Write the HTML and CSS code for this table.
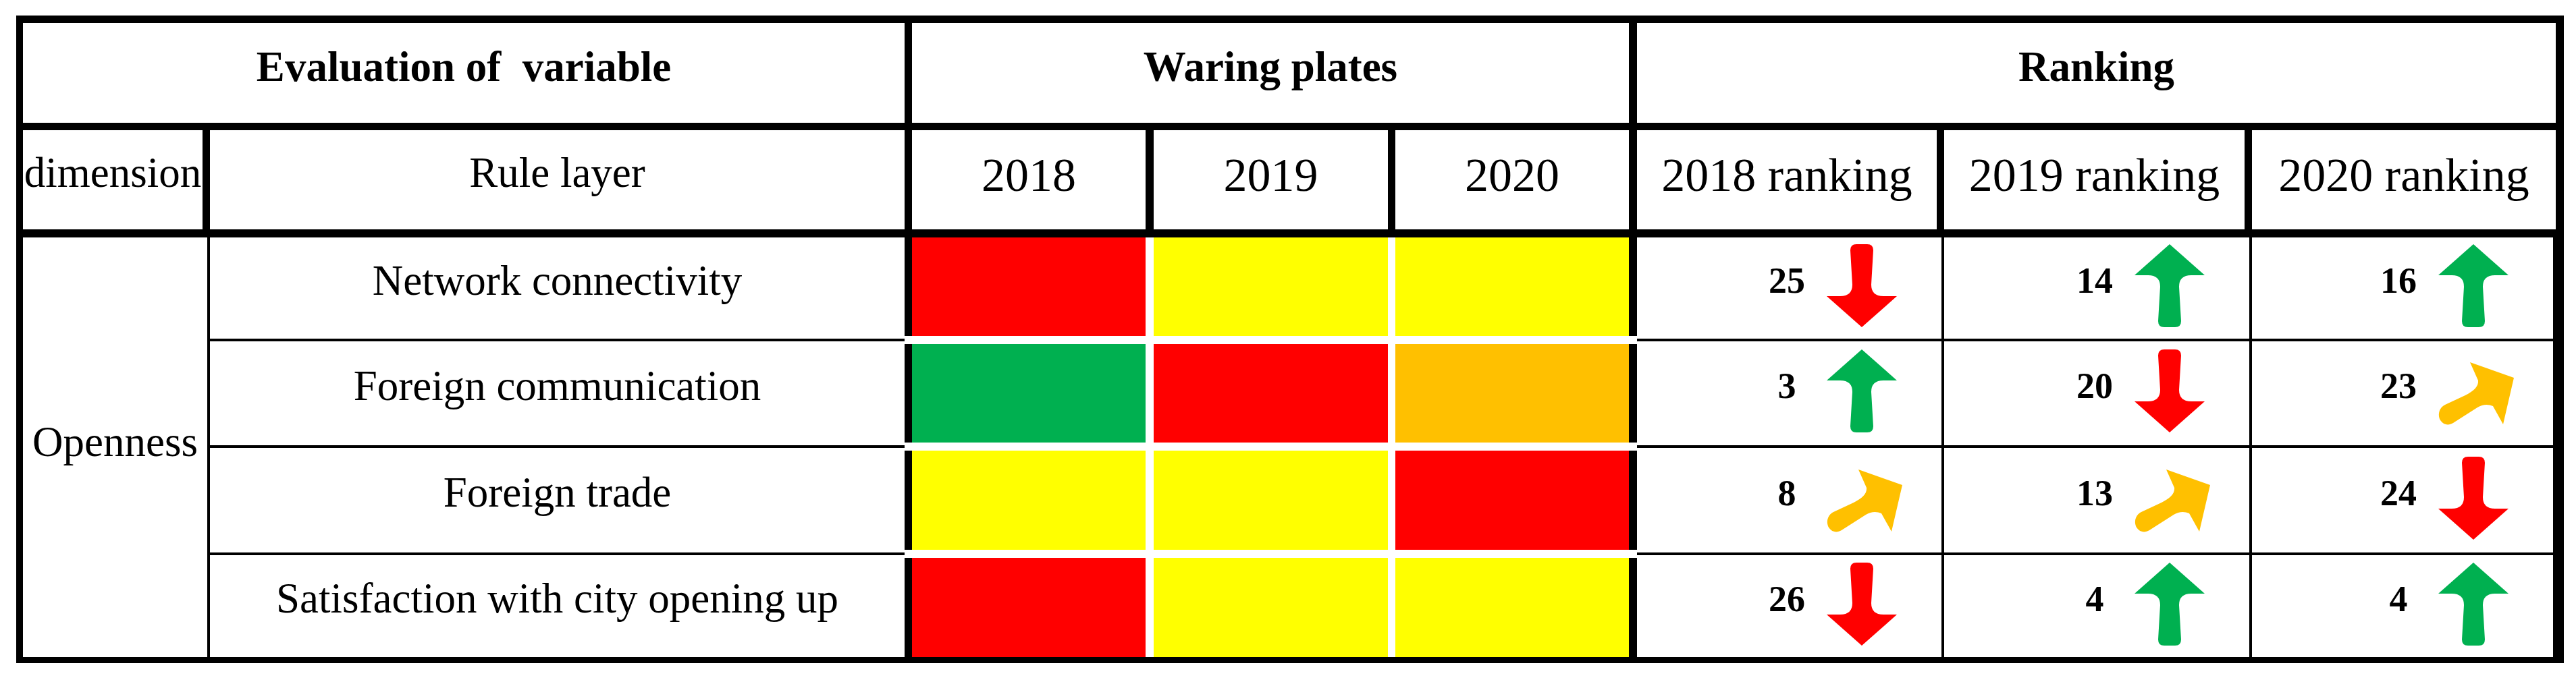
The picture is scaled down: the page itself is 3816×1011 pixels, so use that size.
FILE: index.html
```html
<!DOCTYPE html>
<html lang="en">
<head>
<meta charset="utf-8">
<title>Openness warning plates and ranking</title>
<link rel="stylesheet" href="styles.css">
</head>
<body>
<div class="sheet">
  <div class="cell hd1 span2">Evaluation of&nbsp; variable</div>
  <div class="cell hd1 span3 wide-r">Waring plates</div>
  <div class="cell hd1 span3 no-r">Ranking</div>

  <div class="cell hd2 small">dimension</div>
  <div class="cell hd2 small">Rule layer</div>
  <div class="cell hd2 wide-r">2018</div>
  <div class="cell hd2">2019</div>
  <div class="cell hd2 wide-r">2020</div>
  <div class="cell hd2">2018 ranking</div>
  <div class="cell hd2">2019 ranking</div>
  <div class="cell hd2 no-r">2020 ranking</div>

  <div class="cell dim">Openness</div>

  <div class="cell rule">Network connectivity</div>
  <div class="cell plate c1 b red"></div>
  <div class="cell plate c2 b yellow"></div>
  <div class="cell plate c3 b yellow"></div>
  <div class="cell rank"><span class="num">25</span><svg class="arrow" viewBox="0 0 112 123"><path class="down" d="M35,9 Q35,0 44,0 L60,0 Q69,0 69,9 L66,60 Q66,77 84,77 L104,77 L52,123 L0,77 L20,77 Q38,77 38,60 Z"/></svg></div>
  <div class="cell rank"><span class="num">14</span><svg class="arrow" viewBox="0 0 112 123"><path class="up" d="M35,114 Q35,123 44,123 L60,123 Q69,123 69,114 L66,63 Q66,46 84,46 L104,46 L52,0 L0,46 L20,46 Q38,46 38,63 Z"/></svg></div>
  <div class="cell rank no-r"><span class="num">16</span><svg class="arrow" viewBox="0 0 112 123"><path class="up" d="M35,114 Q35,123 44,123 L60,123 Q69,123 69,114 L66,63 Q66,46 84,46 L104,46 L52,0 L0,46 L20,46 Q38,46 38,63 Z"/></svg></div>

  <div class="cell rule">Foreign communication</div>
  <div class="cell plate c1 t b green"></div>
  <div class="cell plate c2 t b red"></div>
  <div class="cell plate c3 t b orange"></div>
  <div class="cell rank"><span class="num">3</span><svg class="arrow" viewBox="0 0 112 123"><path class="up" d="M35,114 Q35,123 44,123 L60,123 Q69,123 69,114 L66,63 Q66,46 84,46 L104,46 L52,0 L0,46 L20,46 Q38,46 38,63 Z"/></svg></div>
  <div class="cell rank"><span class="num">20</span><svg class="arrow" viewBox="0 0 112 123"><path class="down" d="M35,9 Q35,0 44,0 L60,0 Q69,0 69,9 L66,60 Q66,77 84,77 L104,77 L52,123 L0,77 L20,77 Q38,77 38,60 Z"/></svg></div>
  <div class="cell rank no-r"><span class="num">23</span><svg class="arrow" viewBox="0 0 112 123"><path class="side" transform="translate(0,19)" d="M47,0 L112,23 L96,92 L81,65 C74,62 66,62 58,67 L22,90 C14,95 6,92 2,84 C-1,76 2,67 10,63 L40,49 C52,43 60,36 59,27 Z"/></svg></div>

  <div class="cell rule">Foreign trade</div>
  <div class="cell plate c1 t b yellow"></div>
  <div class="cell plate c2 t b yellow"></div>
  <div class="cell plate c3 t b red"></div>
  <div class="cell rank"><span class="num">8</span><svg class="arrow" viewBox="0 0 112 123"><path class="side" transform="translate(0,19)" d="M47,0 L112,23 L96,92 L81,65 C74,62 66,62 58,67 L22,90 C14,95 6,92 2,84 C-1,76 2,67 10,63 L40,49 C52,43 60,36 59,27 Z"/></svg></div>
  <div class="cell rank"><span class="num">13</span><svg class="arrow" viewBox="0 0 112 123"><path class="side" transform="translate(0,19)" d="M47,0 L112,23 L96,92 L81,65 C74,62 66,62 58,67 L22,90 C14,95 6,92 2,84 C-1,76 2,67 10,63 L40,49 C52,43 60,36 59,27 Z"/></svg></div>
  <div class="cell rank no-r"><span class="num">24</span><svg class="arrow" viewBox="0 0 112 123"><path class="down" d="M35,9 Q35,0 44,0 L60,0 Q69,0 69,9 L66,60 Q66,77 84,77 L104,77 L52,123 L0,77 L20,77 Q38,77 38,60 Z"/></svg></div>

  <div class="cell rule end">Satisfaction with city opening up</div>
  <div class="cell plate c1 t red"></div>
  <div class="cell plate c2 t yellow"></div>
  <div class="cell plate c3 t yellow"></div>
  <div class="cell rank end"><span class="num">26</span><svg class="arrow" viewBox="0 0 112 123"><path class="down" d="M35,9 Q35,0 44,0 L60,0 Q69,0 69,9 L66,60 Q66,77 84,77 L104,77 L52,123 L0,77 L20,77 Q38,77 38,60 Z"/></svg></div>
  <div class="cell rank end"><span class="num">4</span><svg class="arrow" viewBox="0 0 112 123"><path class="up" d="M35,114 Q35,123 44,123 L60,123 Q69,123 69,114 L66,63 Q66,46 84,46 L104,46 L52,0 L0,46 L20,46 Q38,46 38,63 Z"/></svg></div>
  <div class="cell rank end no-r"><span class="num">4</span><svg class="arrow" viewBox="0 0 112 123"><path class="up" d="M35,114 Q35,123 44,123 L60,123 Q69,123 69,114 L66,63 Q66,46 84,46 L104,46 L52,0 L0,46 L20,46 Q38,46 38,63 Z"/></svg></div>
</div>
</body>
</html>
```

FILE: styles.css
```css
html, body {
  margin: 0;
  padding: 0;
  background: #ffffff;
}

body {
  font-family: "Liberation Serif", "Times New Roman", serif;
  color: #000000;
}

.sheet {
  display: grid;
  width: max-content;
  margin: 23px 0 0 24px;
  grid-template-columns: 277px 1040px 358px 358px 358px 455px 456px 450px;
  grid-template-rows: 159px 159px 154px 158px 159px 151px;
  border-style: solid;
  border-color: #000000;
  border-width: 11px 12px 9px 10px;
}

.cell {
  box-sizing: border-box;
  display: flex;
  align-items: center;
  justify-content: center;
  text-align: center;
  white-space: nowrap;
  border: 0 solid #000000;
  line-height: normal;
  min-width: 0;
}

.span2 { grid-column: span 2; }
.span3 { grid-column: span 3; }

.hd1 {
  font-weight: bold;
  font-size: 63px;
  padding-bottom: 18px;
  border-right-width: 11px;
  border-bottom-width: 11px;
}

.hd2 {
  font-size: 70px;
  padding-bottom: 14px;
  border-right-width: 11px;
  border-bottom-width: 12px;
}

.hd2.small {
  font-size: 63px;
  padding-bottom: 20px;
}

.wide-r { border-right-width: 12px; }
.no-r { border-right-width: 0; }

.dim {
  grid-row: span 4;
  font-size: 63px;
  padding-bottom: 16px;
  border-right-width: 4px;
}

.rule {
  font-size: 63px;
  padding-bottom: 22px;
  border-right-width: 11px;
  border-bottom-width: 4px;
}

.plate {
  flex-direction: column;
  align-items: stretch;
  justify-content: flex-start;
  border-right-style: solid;
}

.plate.c1 { border-right: 12px solid #ffffff; }
.plate.c2 { border-right: 11px solid #ffffff; }
.plate.c3 { border-right: 12px solid #000000; }

.plate.t::before {
  content: "";
  display: block;
  height: 4px;
  flex: none;
  background: #ffffff;
}

.plate.b::after {
  content: "";
  display: block;
  height: 8px;
  flex: none;
  margin-top: auto;
  background: #ffffff;
}

.plate.c1::before,
.plate.c1::after { margin-left: -11px; }

.plate.c3::before,
.plate.c3::after { margin-right: -12px; }

.red { background: #ff0000; }
.yellow { background: #ffff00; }
.green { background: #00b050; }
.orange { background: #ffc000; }

.rank {
  justify-content: flex-end;
  padding-right: 58px;
  border-right-width: 4px;
  border-bottom-width: 4px;
}

.end { border-bottom-width: 0; }

.num {
  width: 54px;
  margin-right: 32px;
  margin-bottom: 22px;
  font-size: 54px;
  font-weight: bold;
  text-align: center;
}

.arrow {
  width: 112px;
  height: 123px;
  flex: none;
  overflow: visible;
  margin-bottom: 7px;
}

.down { fill: #ff0000; }
.up { fill: #00b050; }
.side { fill: #ffc000; }
```
